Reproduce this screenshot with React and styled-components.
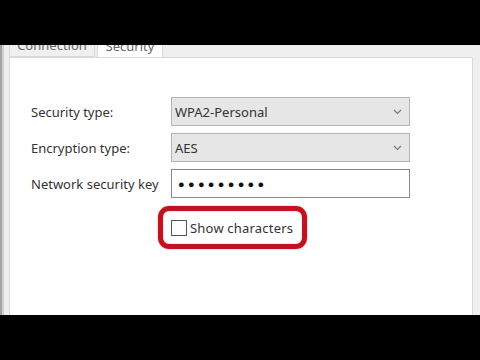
import React from "react";
import styled, { createGlobalStyle } from "styled-components";

const Global = createGlobalStyle`
  html, body { margin: 0; padding: 0; background: #000; }
  body { font-family: "Noto Sans", "Open Sans", sans-serif; }
`;

const Page = styled.div`
  width: 480px;
  height: 360px;
  background: #000;
  display: flex;
  flex-direction: column;
  overflow: hidden;
`;

const Bar = styled.div`
  height: 45px;
  flex: none;
  background: #000;
`;

const Window = styled.div`
  height: 270px;
  flex: none;
  background: #efefef;
  border-left: 2px solid #a4a4a4;
  box-shadow: inset 2px 0 0 #cfcfcf;
  padding: 0 7px 0 7px;
  display: flex;
  flex-direction: column;
  box-sizing: border-box;
`;

const TabStrip = styled.div`
  height: 12px;
  flex: none;
  display: flex;
  align-items: flex-end;
  overflow: hidden;
  position: relative;
  z-index: 1;
`;

const Tab = styled.div`
  height: 22px;
  flex: none;
  box-sizing: border-box;
  display: flex;
  align-items: flex-start;
  justify-content: center;
  padding-top: 3px;
  width: ${(p) => p.$w}px;
  margin-left: ${(p) => p.$ml || 0}px;
  background: ${(p) => (p.$active ? "#fff" : "#f0f0f0")};
  border: 1px solid #d9d9d9;
  border-bottom: ${(p) => (p.$active ? "none" : "1px solid #d9d9d9")};
  margin-bottom: ${(p) => (p.$active ? "-1px" : "0")};
  color: #666;
  font-size: 13px;
  line-height: 12px;
  align-self: flex-end;
`;

const Panel = styled.div`
  flex: 1;
  background: #fff;
  border: 1px solid #d9d9d9;
  border-bottom: none;
  padding: 39px 0 0 21px;
  display: flex;
  flex-direction: column;
  gap: 7px;
`;

const Row = styled.div`
  display: flex;
  align-items: center;
  height: 29px;
`;

const Label = styled.div`
  width: 140px;
  flex: none;
  font-size: 13px;
  color: #333;
  white-space: nowrap;
`;

const Select = styled.div`
  width: 239px;
  height: 29px;
  box-sizing: border-box;
  background: #e6e6e6;
  border: 1px solid #b4b4b4;
  display: flex;
  align-items: center;
  justify-content: space-between;
  padding: 0 7px 0 3px;
  font-size: 13px;
  color: #333;
`;

const Input = styled.div`
  width: 239px;
  height: 29px;
  box-sizing: border-box;
  background: #fff;
  border: 1px solid #8a8a8a;
  display: flex;
  align-items: center;
  padding: 0 6px;
  font-size: 11px;
  letter-spacing: 3.3px;
  color: #111;
`;

const CheckArea = styled.div`
  margin-left: 127px;
  margin-top: 1px;
  align-self: flex-start;
  display: inline-flex;
  align-items: center;
  gap: 3px;
  height: 43px;
  box-sizing: border-box;
  padding: 0 9px 0 8px;
  border: 5px solid #c0121f;
  border-radius: 11px;
  box-shadow: 0 0 2px rgba(200, 30, 40, 0.5), inset 0 0 2px rgba(220, 80, 90, 0.5);
`;

const Box = styled.div`
  width: 16px;
  height: 16px;
  box-sizing: border-box;
  border: 1px solid #555;
  background: #fff;
  flex: none;
`;

const CheckText = styled.span`
  font-size: 13px;
  color: #333;
  letter-spacing: 0.2px;
  white-space: nowrap;
`;

const Chevron = () => (
  <svg width="9" height="6" viewBox="0 0 9 6">
    <path d="M1 1 L4.5 4.5 L8 1" fill="none" stroke="#777" strokeWidth="1.1" />
  </svg>
);

export default function App() {
  return (
    <Page>
      <Global />
      <Bar />
      <Window>
        <TabStrip>
          <Tab $w={86}>Connection</Tab>
          <Tab $w={66} $ml={2} $active>Security</Tab>
        </TabStrip>
        <Panel>
          <Row>
            <Label>Security type:</Label>
            <Select>
              WPA2-Personal
              <Chevron />
            </Select>
          </Row>
          <Row>
            <Label>Encryption type:</Label>
            <Select>
              AES
              <Chevron />
            </Select>
          </Row>
          <Row>
            <Label>Network security key</Label>
            <Input>●●●●●●●●●</Input>
          </Row>
          <CheckArea>
            <Box />
            <CheckText>Show characters</CheckText>
          </CheckArea>
        </Panel>
      </Window>
      <Bar />
    </Page>
  );
}
